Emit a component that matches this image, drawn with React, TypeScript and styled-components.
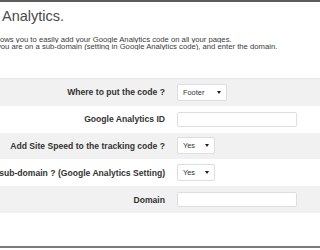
import React from "react";
import styled, { createGlobalStyle } from "styled-components";

const GlobalStyle = createGlobalStyle`
  html, body {
    margin: 0;
    padding: 0;
    background: #ffffff;
    overflow: hidden;
  }
  body {
    font-family: "Liberation Sans", Arial, sans-serif;
  }
`;

const Page = styled.div`
  width: 100%;
  min-width: 250px;
  height: 248px;
  box-sizing: border-box;
  border-top: 2px solid #5c5c5c;
  border-bottom: 2px solid #7a7a7a;
  display: flex;
  flex-direction: column;
  overflow: hidden;
`;

const Title = styled.h2`
  margin: 5px 0 0 -48px;
  font-size: 14.5px;
  line-height: 18px;
  font-weight: normal;
  color: #4a4a4a;
  white-space: nowrap;
  overflow: hidden;
`;

const Description = styled.div`
  margin-top: 10.5px;
  font-size: 7.7px;
  line-height: 7.2px;
  color: #3a3a3a;
  overflow: hidden;
`;

const DescLine = styled.p<{ $shift: number }>`
  margin: 0 0 0 ${(p) => p.$shift}px;
  white-space: nowrap;
  overflow: hidden;
`;

const Table = styled.div`
  margin-top: 28.1px;
  border-top: 1px solid #e8e8e8;
  display: flex;
  flex-direction: column;
`;

const Row = styled.div<{ $shaded: boolean }>`
  height: 26.8px;
  display: flex;
  align-items: center;
  gap: 12px;
  overflow: hidden;
  background: ${(p) => (p.$shaded ? "#f1f1f1" : "#ffffff")};
`;

const Label = styled.label`
  flex: 0 0 165px;
  width: 165px;
  min-width: 0;
  display: flex;
  justify-content: flex-end;
  font-size: 8.6px;
  font-weight: bold;
  color: #333333;
  white-space: nowrap;
`;

const LabelText = styled.span`
  flex-shrink: 0;
`;

const SelectBox = styled.div<{ $width: number }>`
  flex-shrink: 0;
  width: ${(p) => p.$width}px;
  height: 17px;
  box-sizing: border-box;
  padding: 0 5px 0 5px;
  display: flex;
  align-items: center;
  justify-content: space-between;
  background: #ffffff;
  border: 1px solid #dedede;
  border-radius: 2px;
  font-size: 7.4px;
  color: #333333;
`;

const Caret = styled.span`
  width: 0;
  height: 0;
  border-left: 2px solid transparent;
  border-right: 2px solid transparent;
  border-top: 3px solid #222222;
`;

const TextField = styled.input`
  width: 120px;
  height: 15px;
  box-sizing: border-box;
  margin: 0;
  padding: 0 4px;
  background: #ffffff;
  border: 1px solid #dedede;
  border-radius: 2px;
  flex-shrink: 0;
`;

const Select = ({ value, width }: { value: string; width: number }) => (
  <SelectBox $width={width}>
    <span>{value}</span>
    <Caret />
  </SelectBox>
);

export default function App() {
  return (
    <>
      <GlobalStyle />
      <Page>
        <Title>Google Analytics.</Title>
        <Description>
          <DescLine $shift={-7.7}>
            allows you to easily add your Google Analytics code on all your pages.
          </DescLine>
          <DescLine $shift={-3}>
            you are on a sub-domain (setting in Google Analytics code), and enter the domain.
          </DescLine>
        </Description>
        <Table>
          <Row $shaded>
            <Label><LabelText>Where to put the code ?</LabelText></Label>
            <Select value="Footer" width={50} />
          </Row>
          <Row $shaded={false}>
            <Label><LabelText>Google Analytics ID</LabelText></Label>
            <TextField type="text" />
          </Row>
          <Row $shaded>
            <Label><LabelText>Add Site Speed to the tracking code ?</LabelText></Label>
            <Select value="Yes" width={38} />
          </Row>
          <Row $shaded={false}>
            <Label>
              <LabelText>Are you on a sub-domain ? (Google Analytics Setting)</LabelText>
            </Label>
            <Select value="Yes" width={38} />
          </Row>
          <Row $shaded>
            <Label><LabelText>Domain</LabelText></Label>
            <TextField type="text" />
          </Row>
        </Table>
      </Page>
    </>
  );
}
